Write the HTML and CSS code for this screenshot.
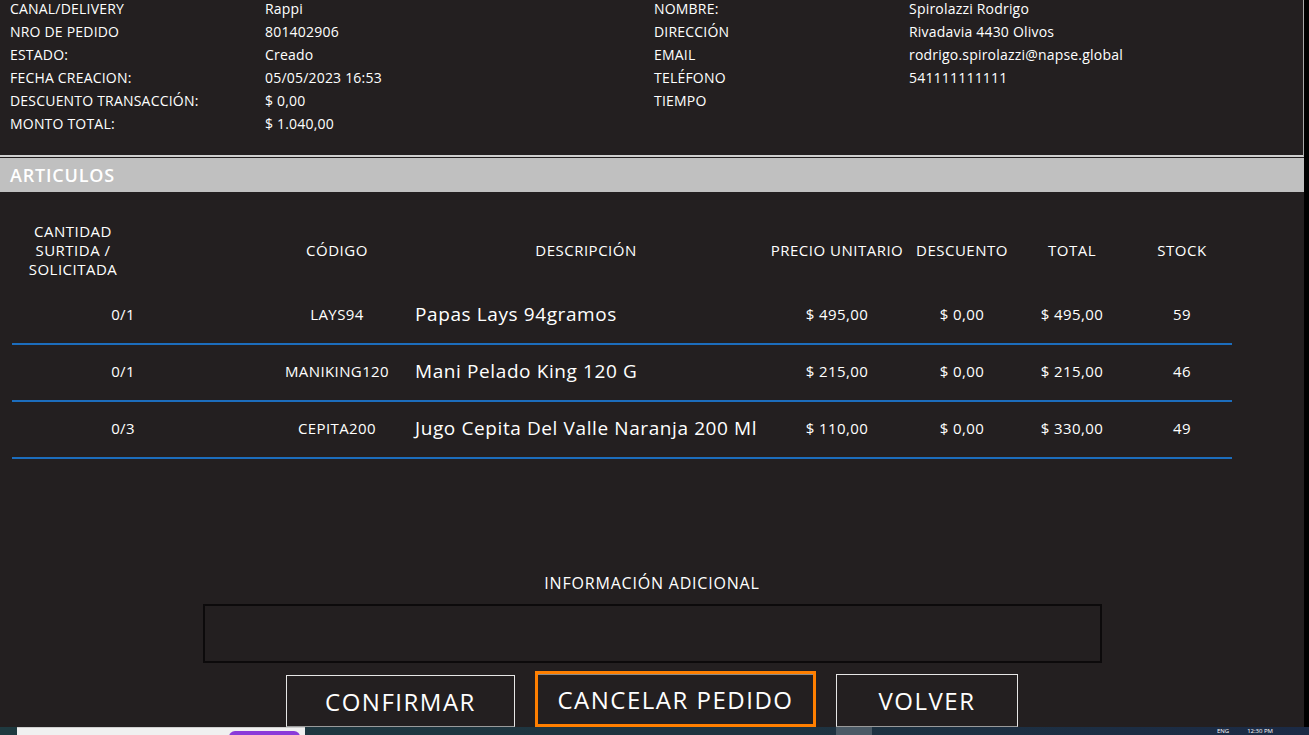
FILE: index.html
```html
<!DOCTYPE html>
<html>
<head>
    <title>Detalle de pedido</title>
    <link rel="stylesheet" href="styles.css">
</head>
<body>
    <div class="screen">
        <div class="main">
            <div class="order-info">
                <div class="info-grid">
                    <span>CANAL/DELIVERY</span><span>Rappi</span><span>NOMBRE:</span><span>Spirolazzi Rodrigo</span>
                    <span>NRO DE PEDIDO</span><span>801402906</span><span>DIRECCIÓN</span><span>Rivadavia 4430 Olivos</span>
                    <span>ESTADO:</span><span>Creado</span><span>EMAIL</span><span>rodrigo.spirolazzi@napse.global</span>
                    <span>FECHA CREACION:</span><span>05/05/2023 16:53</span><span>TELÉFONO</span><span>541111111111</span>
                    <span>DESCUENTO TRANSACCIÓN:</span><span>$ 0,00</span><span>TIEMPO</span><span></span>
                    <span>MONTO TOTAL:</span><span>$ 1.040,00</span><span></span><span></span>
                </div>
            </div>
            <div class="section-bar">ARTICULOS</div>

            <div class="items">
                <div class="items-head">
                    <div class="col-qty">CANTIDAD<br>SURTIDA /<br>SOLICITADA</div>
                    <div>CÓDIGO</div>
                    <div>DESCRIPCIÓN</div>
                    <div>PRECIO UNITARIO</div>
                    <div>DESCUENTO</div>
                    <div>TOTAL</div>
                    <div class="col-stock">STOCK</div>
                </div>
                <div class="item-row">
                    <div class="col-qty">0/1</div>
                    <div>LAYS94</div>
                    <div class="col-desc">Papas Lays 94gramos</div>
                    <div>$ 495,00</div>
                    <div>$ 0,00</div>
                    <div>$ 495,00</div>
                    <div class="col-stock">59</div>
                </div>
                <div class="item-row">
                    <div class="col-qty">0/1</div>
                    <div>MANIKING120</div>
                    <div class="col-desc">Mani Pelado King 120 G</div>
                    <div>$ 215,00</div>
                    <div>$ 0,00</div>
                    <div>$ 215,00</div>
                    <div class="col-stock">46</div>
                </div>
                <div class="item-row">
                    <div class="col-qty">0/3</div>
                    <div>CEPITA200</div>
                    <div class="col-desc">Jugo Cepita Del Valle Naranja 200 Ml</div>
                    <div>$ 110,00</div>
                    <div>$ 0,00</div>
                    <div>$ 330,00</div>
                    <div class="col-stock">49</div>
                </div>
            </div>

            <div class="extra">
                <div class="extra-label">INFORMACIÓN ADICIONAL</div>
                <textarea class="extra-box"></textarea>
                <div class="actions">
                    <button type="button" class="btn">CONFIRMAR</button>
                    <button type="button" class="btn btn-focus">CANCELAR PEDIDO</button>
                    <button type="button" class="btn btn-back">VOLVER</button>
                </div>
            </div>
        </div>
        <div class="edge"></div>
    </div>

    <div class="taskbar">
        <div class="task-window"><span class="task-pill"></span></div>
        <div class="task-btn"></div>
        <div class="task-tray"><span>ENG</span><span>12:30 PM</span></div>
    </div>
</body>
</html>
```

FILE: styles.css
```css
body {
    margin: 0;
    width: 1309px;
    height: 735px;
    overflow: hidden;
    background-color: #231f20;
    color: #fff;
    font-family: "Open Sans", "DejaVu Sans", sans-serif;
}
.screen {
    display: flex;
    height: 727px;
}
.main {
    width: 1304px;
    display: flex;
    flex-direction: column;
}
.edge {
    flex: 1;
    background-color: #000;
}
.order-info {
    height: 157px;
    box-sizing: border-box;
    border-right: 1px solid #a8a8a8;
    border-bottom: 2px solid #cfcfcf;
    overflow: hidden;
}
.info-grid {
    display: grid;
    grid-template-columns: 255px 389px 255px auto;
    padding-left: 10px;
    margin-top: -3px;
    font-size: 14px;
    font-weight: 500;
    letter-spacing: 0.2px;
    line-height: 23px;
}
.section-bar {
    margin-top: 1px;
    height: 34px;
    line-height: 35px;
    background-color: #c0c0c0;
    padding-left: 10px;
    font-size: 18px;
    font-weight: 600;
    letter-spacing: 0.8px;
}
.items {
    width: 1220px;
    margin-left: 12px;
}
.items-head,
.item-row {
    display: grid;
    grid-template-columns: 257px 136px 362px 140px 110px 110px 105px;
    align-items: center;
    text-align: center;
    font-size: 15px;
    letter-spacing: 0.4px;
}
.items-head {
    height: 96px;
    box-sizing: border-box;
    padding-top: 20px;
    line-height: 19px;
    letter-spacing: 0.5px;
}
.items-head .col-qty {
    padding-right: 135px;
}
.item-row {
    height: 57px;
    box-sizing: border-box;
    padding-bottom: 3px;
    border-bottom: 2px solid #1c6dbd;
}
.item-row .col-qty {
    text-align: right;
    padding-right: 134px;
}
.col-stock {
    padding-left: 5px;
}
.col-desc {
    text-align: left;
    padding-left: 10px;
    font-size: 19px;
    font-weight: 500;
    letter-spacing: 0.6px;
    white-space: nowrap;
}
.extra {
    margin-top: 114px;
    display: flex;
    flex-direction: column;
    align-items: center;
}
.extra-label {
    font-size: 16px;
    letter-spacing: 0.8px;
    line-height: 20px;
}
.extra-box {
    width: 899px;
    height: 59px;
    box-sizing: border-box;
    margin: 11px 0 0 0;
    background-color: #231f20;
    border: 2px solid #0c0a0b;
    resize: none;
    outline: none;
}
.actions {
    display: flex;
    align-items: flex-end;
    gap: 20px;
    height: 56px;
    margin-top: 8px;
}
.btn {
    width: 229px;
    height: 52px;
    background-color: #231f20;
    color: #fff;
    border: 1px solid #e6e6e6;
    border-bottom-color: #9a9a9a;
    font-family: "Open Sans", "DejaVu Sans", sans-serif;
    font-size: 24px;
    font-weight: 500;
    letter-spacing: 1.5px;
    padding: 0;
}
.btn-focus {
    width: 281px;
    height: 56px;
    border: 3px solid #ff7f00;
    box-shadow: inset 0 1px 0 #8a8a8a;
}
.btn-back {
    width: 182px;
    height: 53px;
}
.taskbar {
    height: 8px;
    display: flex;
    background: linear-gradient(90deg, #1f3a40, #1e3340 60%, #1b2a45);
    overflow: hidden;
}
.task-window {
    margin-left: 17px;
    width: 288px;
    background-color: #f0f0f0;
    border-top: 1px solid #cfcfcf;
    position: relative;
}
.task-pill {
    position: absolute;
    left: 212px;
    top: 3px;
    width: 71px;
    height: 12px;
    border-radius: 6px;
    background-color: #8a3bd9;
}
.task-btn {
    margin-left: 531px;
    width: 36px;
    background-color: #4b5a66;
}
.task-tray {
    margin-left: auto;
    margin-right: 36px;
    display: flex;
    gap: 18px;
    font-size: 6px;
    line-height: 8px;
    color: #fff;
}
```
